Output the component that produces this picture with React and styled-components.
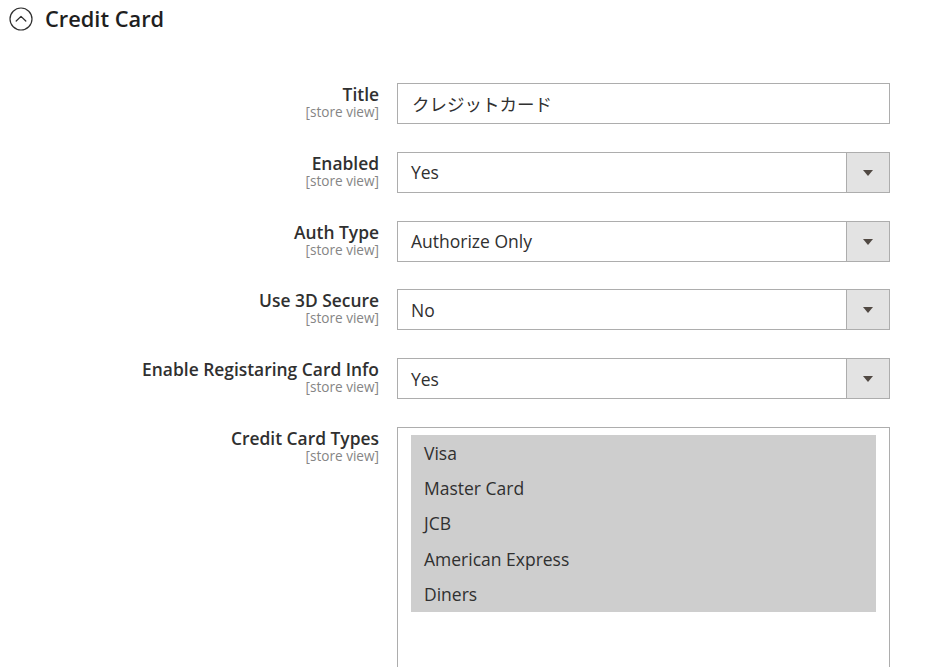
import React from "react";
import styled, { createGlobalStyle } from "styled-components";

const Global = createGlobalStyle`
  html, body { margin: 0; padding: 0; background: #fff; }
  body {
    font-family: "Open Sans", "Noto Sans CJK JP", sans-serif;
    color: #303030;
    overflow: hidden;
  }
`;

const Page = styled.div`
  width: 937px;
  height: 667px;
  overflow: hidden;
`;

const Header = styled.div`
  display: flex;
  align-items: center;
  gap: 12px;
  padding: 7px 0 0 9px;
  height: 24px;
`;

const HeaderTitle = styled.h2`
  margin: 0;
  font-size: 21.8px;
  font-weight: 600;
  color: #1f1f1f;
  line-height: 24px;
`;

const Form = styled.div`
  display: flex;
  flex-direction: column;
  gap: 27.8px;
  padding-top: 52px;
`;

const Row = styled.div`
  display: grid;
  grid-template-columns: 379px 493px;
  column-gap: 18px;
  align-items: start;
`;

const Label = styled.div`
  text-align: right;
  padding-top: 1px;
`;

const LabelText = styled.div`
  font-size: 17.4px;
  font-weight: 600;
  line-height: 20px;
  color: #303030;
`;

const Scope = styled.div`
  font-size: 13.6px;
  line-height: 15px;
  color: #858585;
`;

const TextInput = styled.div`
  box-sizing: border-box;
  height: 41px;
  border: 1px solid #adadad;
  display: flex;
  align-items: center;
  padding: 0 14px;
  font-size: 17.5px;
  color: #303030;
`;

const SelectBox = styled.div`
  box-sizing: border-box;
  height: 41px;
  border: 1px solid #adadad;
  display: flex;
  align-items: stretch;
`;

const SelectValue = styled.div`
  flex: 1;
  display: flex;
  align-items: center;
  padding-left: 13px;
  font-size: 17.5px;
  color: #303030;
`;

const ArrowBox = styled.div`
  width: 42px;
  background: #e3e3e3;
  border-left: 1px solid #adadad;
  display: flex;
  align-items: center;
  justify-content: center;
`;

const Triangle = styled.span`
  width: 0;
  height: 0;
  border-left: 5px solid transparent;
  border-right: 5px solid transparent;
  border-top: 6px solid #514943;
  margin-top: 1px;
`;

const MultiBox = styled.div`
  box-sizing: border-box;
  height: 300px;
  border: 1px solid #adadad;
  padding: 7px 13px;
`;

const Option = styled.div`
  height: 35.4px;
  display: flex;
  align-items: center;
  padding-left: 13px;
  font-size: 17.5px;
  color: #303030;
  background: ${(p) => (p.$selected ? "#cecece" : "transparent")};
`;

const CollapseIcon = () => (
  <svg width="24" height="24" viewBox="0 0 24 24" fill="none">
    <circle cx="12" cy="12" r="11" stroke="#303030" strokeWidth="1.2" />
    <path d="M7.2 14 L12 9.4 L16.8 14" stroke="#303030" strokeWidth="1.3" strokeLinecap="round" strokeLinejoin="round" />
  </svg>
);

const fields = [
  { label: "Title", type: "text", value: "クレジットカード" },
  { label: "Enabled", type: "select", value: "Yes" },
  { label: "Auth Type", type: "select", value: "Authorize Only" },
  { label: "Use 3D Secure", type: "select", value: "No" },
  { label: "Enable Registaring Card Info", type: "select", value: "Yes" },
];

const cardTypes = ["Visa", "Master Card", "JCB", "American Express", "Diners"];

export default function App() {
  return (
    <Page>
      <Global />
      <Header>
        <CollapseIcon />
        <HeaderTitle>Credit Card</HeaderTitle>
      </Header>
      <Form>
        {fields.map((f) => (
          <Row key={f.label}>
            <Label>
              <LabelText>{f.label}</LabelText>
              <Scope>[store view]</Scope>
            </Label>
            {f.type === "text" ? (
              <TextInput>{f.value}</TextInput>
            ) : (
              <SelectBox>
                <SelectValue>{f.value}</SelectValue>
                <ArrowBox>
                  <Triangle />
                </ArrowBox>
              </SelectBox>
            )}
          </Row>
        ))}
        <Row>
          <Label>
            <LabelText>Credit Card Types</LabelText>
            <Scope>[store view]</Scope>
          </Label>
          <MultiBox>
            {cardTypes.map((c) => (
              <Option key={c} $selected>
                {c}
              </Option>
            ))}
          </MultiBox>
        </Row>
      </Form>
    </Page>
  );
}
